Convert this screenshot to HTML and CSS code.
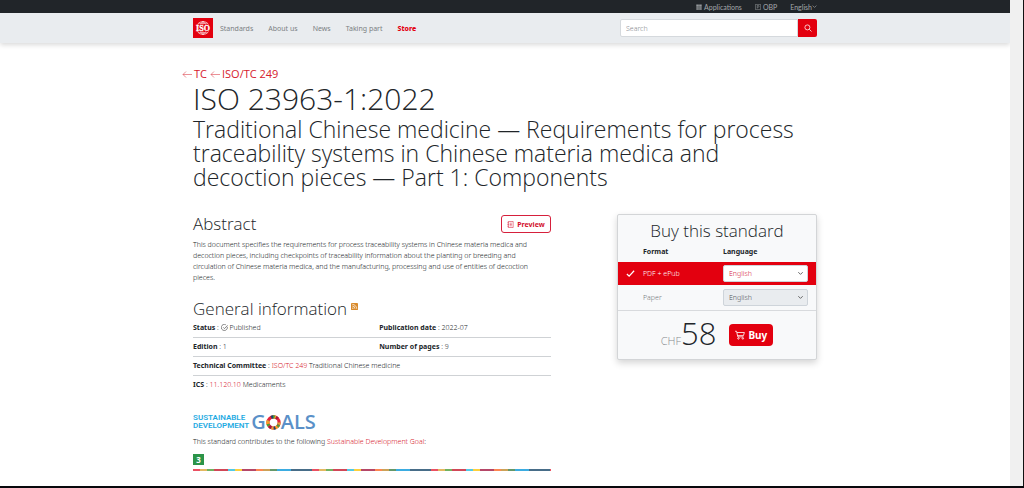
FILE: index.html
```html
<!DOCTYPE html>
<html lang="en">
<head>
<meta charset="utf-8">
<title>ISO 23963-1:2022</title>
<link rel="stylesheet" href="styles.css">
</head>
<body>
<div class="window">
<div class="page">
  <div class="topbar">
    <nav class="container topbar-links">
      <a href="#"><svg class="icon-sm" viewBox="0 0 16 16" fill="currentColor"><path d="M1 1h4v4H1zM6 1h4v4H6zM11 1h4v4h-4zM1 6h4v4H1zM6 6h4v4H6zM11 6h4v4h-4zM1 11h4v4H1zM6 11h4v4H6zM11 11h4v4h-4z"/></svg>Applications</a>
      <a href="#"><svg class="icon-sm" viewBox="0 0 16 16" fill="none" stroke="currentColor" stroke-width="1.3"><path d="M1 1h14v14H1zM6 12V4h2.500a2.300 2.300 0 0 1 0 4.600H6"/></svg>OBP</a>
      <a href="#" class="lang">English<svg class="caret" viewBox="0 0 8 8" fill="none" stroke="currentColor"><path d="M1 2.500 4 5.500 7 2.500"/></svg></a>
    </nav>
  </div>
  <header class="header">
    <div class="container header-row">
      <a href="#" class="logo" aria-label="ISO"><svg viewBox="0 0 20 20"><rect width="20" height="20" fill="#e3000f"/><g fill="none" stroke="#fff" stroke-width=".6"><path d="M4.500 6.500a6.500 6.500 0 0 1 11 0M4.500 13.500a6.500 6.500 0 0 0 11 0M10 3.500v3M10 13.500v3M7.500 6.500Q8 4.500 10 3.500Q12 4.500 12.500 6.500M7.500 13.500Q8 15.500 10 16.500Q12 15.500 12.500 13.500M5.500 5.200h9M5.500 14.800h9"/></g><text class="logo-text" x="10" y="12.800" text-anchor="middle">ISO</text></svg></a>
      <nav class="menu">
        <a href="#">Standards</a><a href="#">About us</a><a href="#">News</a><a href="#">Taking part</a><a href="#" class="active">Store</a>
      </nav>
      <form class="search">
        <input type="text" placeholder="Search" aria-label="Search">
        <button type="button" aria-label="Submit search"><svg viewBox="0 0 16 16" fill="none" stroke="#fff" stroke-width="1.500"><circle cx="6.800" cy="6.800" r="5"/><path d="m10.500 10.500 4.500 4.500"/></svg></button>
      </form>
    </div>
  </header>
  <main class="container">
    <nav class="crumbs">
      <a href="#"><svg class="arrow" viewBox="0 0 10 8" fill="none" stroke="currentColor" stroke-width=".5"><path d="M10 4.500H1M4 1.500 1 4.500l3 3"/></svg>TC</a>
      <a href="#"><svg class="arrow" viewBox="0 0 10 8" fill="none" stroke="currentColor" stroke-width=".5"><path d="M10 4.500H1M4 1.500 1 4.500l3 3"/></svg>ISO/TC 249</a>
    </nav>
    <h1>ISO 23963-1:2022</h1>
    <p class="subtitle">Traditional Chinese medicine — Requirements for process traceability systems in Chinese materia medica and decoction pieces — Part 1: Components</p>
    <div class="columns">
      <div class="details">
        <div class="abstract-head">
          <h2>Abstract</h2>
          <button type="button" class="preview"><svg viewBox="0 0 16 16" fill="none" stroke="currentColor" stroke-width="1.200"><path d="M3 1h11v14H3zM1 4h3M1 8h3M1 12h3M6 5h5M6 8h5M6 11h5"/></svg>Preview</button>
        </div>
        <p class="abstract">This document specifies the requirements for process traceability systems in Chinese materia medica and decoction pieces, including checkpoints of traceability information about the planting or breeding and circulation of Chinese materia medica, and the manufacturing, processing and use of entities of decoction pieces.</p>
        <h2 class="general">General information <svg class="rss" viewBox="0 0 8 8"><rect width="8" height="8" rx="1" fill="#d98a2b"/><g fill="none" stroke="#fff" stroke-width=".8"><path d="M1.500 3.500a3 3 0 0 1 3 3M1.500 1.600a5 5 0 0 1 5 5"/></g><circle cx="2.100" cy="5.900" r=".7" fill="#fff"/></svg></h2>
        <ul class="info">
          <li><span><b>Status</b> : <svg class="check" viewBox="0 0 16 16" fill="none" stroke="#333" stroke-width="1.300"><path d="M14.500 6.500A7 7 0 1 1 11 1.700M5 7.500l3 3 7-7.500"/></svg> Published</span><span><b>Publication date</b> : 2022-07</span></li>
          <li><span><b>Edition</b> : 1</span><span><b>Number of pages</b> : 9</span></li>
          <li><span><b>Technical Committee</b> : <a href="#">ISO/TC 249</a> Traditional Chinese medicine</span></li>
          <li><span><b>ICS</b> : <a href="#">11.120.10</a> Medicaments</span></li>
        </ul>
        <div class="sdg-logo">
          <div class="sdg-small">SUSTAINABLE<br>DEVELOPMENT</div>
          <div class="sdg-big">G<svg class="wheel" viewBox="0 0 16 16" fill="none" stroke-width="3.400"><circle cx="8" cy="8" r="6" stroke="#e5243b"/><circle cx="8" cy="8" r="6" stroke="#dda63a" pathLength="100" stroke-dasharray="6 19"/><circle cx="8" cy="8" r="6" stroke="#4c9f38" pathLength="100" stroke-dasharray="6 27" stroke-dashoffset="-7"/><circle cx="8" cy="8" r="6" stroke="#19486a" pathLength="100" stroke-dasharray="6 44" stroke-dashoffset="-18"/><circle cx="8" cy="8" r="6" stroke="#fd9d24" pathLength="100" stroke-dasharray="6 27" stroke-dashoffset="-13"/><circle cx="8" cy="8" r="6" stroke="#a21942" pathLength="100" stroke-dasharray="6 44" stroke-dashoffset="-32"/></svg>ALS</div>
        </div>
        <p class="contributes">This standard contributes to the following <a href="#">Sustainable Development Goal</a>:</p>
        <a href="#" class="goal">3</a>
        <div class="stripe"></div>
      </div>
      <aside class="buy">
        <h2>Buy this standard</h2>
        <table>
          <thead><tr><th></th><th>Format</th><th>Language</th></tr></thead>
          <tbody>
            <tr class="selected"><td class="mark"><svg viewBox="0 0 10 10" fill="none" stroke="#fff" stroke-width="1.400"><path d="m1 5.500 2.500 2.500L9 2"/></svg></td><td>PDF + ePub</td><td><div class="select"><select aria-label="PDF language"><option>English</option></select><svg viewBox="0 0 8 8" fill="none" stroke="#555"><path d="M1.500 2.500 4 5l2.500-2.500"/></svg></div></td></tr>
            <tr class="paper"><td></td><td>Paper</td><td><div class="select"><select aria-label="Paper language" disabled><option>English</option></select><svg viewBox="0 0 8 8" fill="none" stroke="#555"><path d="M1.500 2.500 4 5l2.500-2.500"/></svg></div></td></tr>
          </tbody>
        </table>
        <div class="checkout">
          <div class="price"><span>CHF</span>58</div>
          <button type="button"><svg viewBox="0 0 16 16" fill="none" stroke="#fff" stroke-width="1.300"><path d="M0 2h2.500l2 9h9M3 4h12l-1.500 5H4.200"/><circle cx="5.500" cy="13.500" r="1.200"/><circle cx="12.500" cy="13.500" r="1.200"/></svg>Buy</button>
        </div>
      </aside>
    </div>
  </main>
</div>
<div class="scroll-track"></div>
</div>
</body>
</html>
```
FILE: styles.css
```css
* { box-sizing: border-box; }
body {
  margin: 0;
  font-family: "Noto Sans", "Open Sans", sans-serif;
  font-weight: 300;
  font-size: 7px;
  color: #212529;
  background: #fff;
}
a { color: #d6202c; text-decoration: none; }
h1, h2, p, ul { margin: 0; padding: 0; font-weight: 300; }
h1, h2, .subtitle, .price { font-family: "Open Sans", sans-serif; }
svg { flex: none; }
.window { display: flex; min-height: 100vh; border-bottom: 2px solid #08080c; }
.page { flex: 1; }
.scroll-track { width: 14px; background: #f0f0f0; border-right: 1px solid #111; }
.container { max-width: 624px; margin: 0 auto; }
.topbar { background: #212529; }
.topbar-links { display: flex; justify-content: flex-end; gap: 13px; height: 13px; align-items: center; font-family: Lato, sans-serif; font-weight: 400; }
.topbar-links a { display: flex; align-items: center; gap: 2px; color: #a4a8ab; }
.icon-sm { width: 6px; height: 6px; }
.caret { width: 5px; height: 5px; }
.topbar-links .lang { gap: 0; }
.header { background: #e9ecef; box-shadow: 0 2px 5px rgba(0, 0, 0, .15); }
.header-row { display: flex; align-items: center; height: 30px; }
.logo, .logo svg { display: block; width: 20px; height: 20px; }
.logo-text { font: bold 8px "Liberation Serif", serif; fill: #fff; stroke: #fff; stroke-width: .3px; }
.menu { display: flex; gap: 15px; padding-left: 7px; flex: 1; }
.menu a { color: #7b7f83; font-weight: 400; }
.menu .active { color: #e3000f; font-weight: 800; }
.search { display: flex; width: 197px; height: 18px; }
.search input { flex: 1; min-width: 0; border: 1px solid #d5d9dd; border-radius: 2px 0 0 2px; padding: 0 5px; font: inherit; background: #fff; }
.search input::placeholder { color: #85898d; opacity: 1; }
.search button { width: 19px; border: 0; border-radius: 0 2px 2px 0; background: #e3000f; padding: 0; display: flex; align-items: center; justify-content: center; }
.search svg { width: 8px; height: 8px; }
.crumbs { display: flex; gap: 3px; margin: 24px 0 0 -11px; font: 400 11px/14px "Open Sans", sans-serif; }
.crumbs a { display: flex; align-items: center; gap: 2px; }
.arrow { width: 10px; height: 8px; }
h1 { font-size: 30px; line-height: 36px; }
.subtitle { font-size: 23px; line-height: 24px; }
.columns { display: flex; justify-content: space-between; align-items: flex-start; margin-top: 25px; }
.details { width: 358px; }
h2 { font-size: 17px; line-height: 20px; }
.abstract-head { display: flex; justify-content: space-between; align-items: center; }
.preview { display: flex; align-items: center; justify-content: center; gap: 3px; width: 50px; height: 18px; border: 1px solid #d6203c; border-radius: 3px; background: #fff; color: #d3102c; font: inherit; font-weight: 700; padding: 0; }
.preview svg { width: 7px; height: 7px; }
.abstract { margin-top: 5px; padding-right: 8px; line-height: 11px; }
.general { margin-top: 16px; }
.rss { width: 7px; height: 7px; vertical-align: 5px; }
.info { list-style: none; }
.info li { display: flex; line-height: 18px; border-bottom: 1px solid #cfd2d5; }
.info li:last-child { border: 0; }
.info span { flex: 1; }
.info span:first-child:not(:last-child) { flex: 0 0 52%; }
.info b { font-weight: 700; }
.check { width: 7px; height: 7px; vertical-align: -1px; }
.sdg-logo { display: flex; align-items: center; gap: 2px; height: 20px; margin-top: 18px; }
.sdg-small { font: 600 8px/8px Roboto, sans-serif; color: #1fabe2; }
.sdg-big { display: flex; align-items: center; font: 600 20px/20px "Open Sans", sans-serif; color: #5a90c8; }
.wheel { width: 15px; height: 15px; }
.contributes { margin-top: 4px; line-height: 11px; }
.goal { display: block; width: 11px; margin-top: 7px; background: #2b9448; color: #fff; font-size: 8px; line-height: 11px; font-weight: 700; text-align: center; }
.stripe { height: 2px; margin-top: 4px; background-image: linear-gradient(90deg, #e5243b 7px, #dda63a 7px, #dda63a 14px, #4c9f38 14px, #4c9f38 21px, #c5192d 21px, #c5192d 35px, #26bde2 35px, #26bde2 42px, #fcc30b 42px, #fcc30b 49px, #a21942 49px, #a21942 63px, #fd6925 63px, #fd6925 70px, #bf8b2e 70px, #bf8b2e 77px, #3f7e44 77px, #3f7e44 84px, #0a97d9 84px, #0a97d9 98px, #19486a 98px); background-size: 119px 2px; opacity: .8; }
.buy { width: 200px; background: #f8f9fa; border: 1px solid #d3d5d7; border-radius: 2px; box-shadow: 0 3px 7px rgba(0, 0, 0, .17); }
.buy h2 { text-align: center; padding-top: 6px; }
.buy table { width: 100%; border-collapse: collapse; }
.buy th, .buy td { padding: 0; text-align: left; height: 23px; }
.buy th { height: 21px; font-weight: 700; }
.buy th:first-child { width: 25px; }
.buy th:nth-child(2) { width: 80px; }
.buy td:last-child { padding-right: 8px; }
.selected { background: #e3000f; color: #fff; }
.paper { border-bottom: 1px solid #d8dadd; color: #73777b; }
.paper td { height: 25px; }
.mark { text-align: center; }
.mark svg { width: 9px; height: 9px; display: block; margin: auto; }
.select { display: grid; align-items: center; }
.select > * { grid-area: 1 / 1; }
.select svg { width: 7px; height: 7px; justify-self: end; margin-right: 4px; pointer-events: none; }
.buy select { appearance: none; width: 100%; height: 17px; border: 1px solid #ced4da; border-radius: 2px; background: #fff; color: #d6203c; font: inherit; padding: 0 5px; }
.buy select:disabled { background: #e9ecef; color: #50555a; opacity: 1; }
.checkout { display: flex; align-items: center; justify-content: center; gap: 13px; height: 48px; }
.price { padding-top: 5px; font-size: 31px; line-height: 38px; }
.price span { font-size: 11px; color: #85898d; }
.checkout button { display: flex; align-items: center; justify-content: center; gap: 3px; width: 44px; height: 22px; border: 0; border-radius: 4px; background: #e3000f; color: #fff; font: inherit; font-size: 10px; font-weight: 700; padding: 0; }
.checkout svg { width: 10px; height: 10px; }
```
